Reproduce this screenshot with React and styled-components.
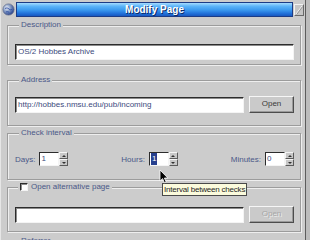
import React from 'react';
import styled, {createGlobalStyle} from 'styled-components';

const GlobalStyle = createGlobalStyle`
  html, body {
    margin: 0;
    padding: 0;
    background: #bcbcbc;
  }
  body {
    font-family: "Liberation Sans", Arial, sans-serif;
    font-size: 8px;
  }
`;

const Window = styled.div`
  position: relative;
  width: 306px;
  height: 240px;
  overflow: hidden;
  box-sizing: border-box;
  background: #cccccc;
  border-left: 1px solid #e6e6e6;
  border-right: 1px solid #5c5c5c;
`;

const TitleBar = styled.div`
  display: flex;
  align-items: center;
  height: 18px;
  padding: 0 1px 0 1px;
  gap: 1px;
`;

const Caption = styled.div`
  flex: 1;
  height: 15px;
  box-sizing: border-box;
  border: 1px solid #1c3c86;
  background: linear-gradient(#a6dcff 0%, #5cb4f8 25%, #3a98ee 55%, #2272da 80%, #1858c0 100%);
  color: #ffffff;
  font: bold 10px "Liberation Sans", Arial, sans-serif;
  line-height: 13px;
  text-align: center;
  text-shadow: 1px 1px 0 #0c2a66;
`;

const CloseBox = styled.div`
  width: 10px;
  height: 12px;
  margin-top: 2px;
  box-sizing: border-box;
  background: #c6c6c6;
  border: 1px solid;
  border-color: #f2f2f2 #6a6a6a #6a6a6a #f2f2f2;
  display: flex;
`;

const Body = styled.div`
  display: flex;
  flex-direction: column;
  padding: 0 4px 0 6px;
`;

const Group = styled.fieldset`
  margin: ${p => p.$mt}px 0 0;
  height: ${p => p.$h}px;
  box-sizing: border-box;
  padding: ${p => p.$pt}px 6px 0 7px;
  border: 1px solid #9c9c9c;
  box-shadow: inset 1px 1px 0 #eeeeee, 1px 1px 0 #eeeeee;
  min-width: 0;
  flex-shrink: 0;
`;

const Legend = styled.legend`
  display: flex;
  align-items: center;
  gap: 3px;
  margin-left: ${p => p.$ml || 4}px;
  padding: 0 2px;
  line-height: 10px;
  color: #4a5888;
  background: #cccccc;
`;

const Row = styled.div`
  display: flex;
  align-items: flex-end;
  gap: 5px;
`;

const SpreadRow = styled.div`
  display: flex;
  align-items: center;
  justify-content: space-between;
`;

const TextField = styled.div`
  flex: 1;
  height: 16px;
  box-sizing: border-box;
  background: #ffffff;
  border: 1px solid;
  border-color: #2c2c2c #f4f4f4 #f4f4f4 #2c2c2c;
  box-shadow: inset 1px 1px 0 #8c8c8c;
  padding-left: 2px;
  line-height: 14px;
  color: #3c4a7c;
  white-space: nowrap;
  overflow: hidden;
`;

const Button = styled.div`
  width: 45px;
  height: 17px;
  box-sizing: border-box;
  background: #cacaca;
  border: 1px solid;
  border-color: #f6f6f6 #4c4c4c #4c4c4c #f6f6f6;
  box-shadow: inset -1px -1px 0 #9a9a9a;
  text-align: center;
  line-height: 14px;
  color: ${p => (p.$disabled ? '#a6a6a6' : '#3a3a3a')};
  text-shadow: ${p => (p.$disabled ? '1px 1px 0 #ececec' : 'none')};
`;

const Field = styled.div`
  display: flex;
  align-items: center;
  gap: 4px;
  color: #4a5888;
`;

const Spin = styled.div`
  display: flex;
  height: 14px;
`;

const SpinValue = styled.div`
  width: 20px;
  box-sizing: border-box;
  background: #ffffff;
  border: 1px solid;
  border-color: #2c2c2c #f4f4f4 #f4f4f4 #2c2c2c;
  padding-left: 1px;
  line-height: 12px;
  color: #3c4a7c;
`;

const Selected = styled.span`
  display: inline-block;
  background: #263f8e;
  color: #ffffff;
  padding: 0 1px;
`;

const SpinButtons = styled.div`
  display: flex;
  flex-direction: column;
  width: 9px;
`;

const SpinButton = styled.div`
  flex: 1;
  box-sizing: border-box;
  background: #c8c8c8;
  border: 1px solid;
  border-color: #f4f4f4 #5a5a5a #5a5a5a #f4f4f4;
  display: flex;
  align-items: center;
  justify-content: center;

  &::after {
    content: '';
    border-left: 2px solid transparent;
    border-right: 2px solid transparent;
    ${p => (p.$down ? 'border-top: 2px solid #303030;' : 'border-bottom: 2px solid #303030;')}
  }
`;

const CheckBox = styled.span`
  display: inline-block;
  width: 8px;
  height: 8px;
  box-sizing: border-box;
  background: #ffffff;
  border: 1px solid;
  border-color: #2c2c2c #f4f4f4 #f4f4f4 #2c2c2c;
  box-shadow: inset 1px 1px 0 #8c8c8c;
`;

const Tooltip = styled.div`
  position: absolute;
  left: 161px;
  top: 183px;
  height: 13px;
  box-sizing: border-box;
  padding: 0 1px;
  border: 1px solid #4a4a4a;
  background: #fbfbdc;
  color: #1e1e1e;
  line-height: 11px;
  letter-spacing: -0.2px;
  white-space: nowrap;
`;

const Pointer = styled.svg`
  position: absolute;
  left: 158px;
  top: 169px;
`;

const AppIcon = () => (
  <svg width="13" height="13" viewBox="0 0 13 13">
    <defs>
      <radialGradient id="g" cx="0.35" cy="0.35" r="0.7">
        <stop offset="0" stopColor="#f4f6fa" />
        <stop offset="0.45" stopColor="#8aa0c8" />
        <stop offset="1" stopColor="#1e3a8a" />
      </radialGradient>
    </defs>
    <circle cx="6.5" cy="6.5" r="5.6" fill="url(#g)" stroke="#6a7490" strokeWidth="0.8" />
    <path d="M3 5.5c1.5-1 3-.5 4 .5s2 1 3 .3M4 9c1-.6 2.4-.3 3.2.5" stroke="#2a4aa0" strokeWidth="0.9" fill="none" />
  </svg>
);

const Spinner = ({value, selected}) => (
  <Spin>
    <SpinValue>{selected ? <Selected>{value}</Selected> : value}</SpinValue>
    <SpinButtons>
      <SpinButton />
      <SpinButton $down />
    </SpinButtons>
  </Spin>
);

export default function App() {
  return (
    <>
      <GlobalStyle />
      <Window>
        <TitleBar>
          <AppIcon />
          <Caption>Modify Page</Caption>
          <CloseBox>
            <svg width="8" height="10" viewBox="0 0 8 10">
              <path d="M1 9L7 1" stroke="#f4f4f4" strokeWidth="1" />
              <path d="M1.8 9.4L7.6 1.6" stroke="#8a8a8a" strokeWidth="0.8" />
            </svg>
          </CloseBox>
        </TitleBar>
        <Body>
          <Group $mt={2} $h={45} $pt={14}>
            <Legend>Description</Legend>
            <Row>
              <TextField>OS/2 Hobbes Archive</TextField>
            </Row>
          </Group>
          <Group $mt={10} $h={51} $pt={11}>
            <Legend>Address</Legend>
            <Row>
              <TextField>http://hobbes.nmsu.edu/pub/incoming</TextField>
              <Button>Open</Button>
            </Row>
          </Group>
          <Group $mt={2} $h={52} $pt={14}>
            <Legend>Check interval</Legend>
            <SpreadRow>
              <Field>Days: <Spinner value="1" /></Field>
              <Field>Hours: <Spinner value="1" selected /></Field>
              <Field>Minutes: <Spinner value="0" /></Field>
            </SpreadRow>
          </Group>
          <Group $mt={2} $h={50} $pt={14}>
            <Legend $ml={3}>
              <CheckBox />
              Open alternative page
            </Legend>
            <Row>
              <TextField />
              <Button $disabled>Open</Button>
            </Row>
          </Group>
          <Group $mt={4} $h={40} $pt={14}>
            <Legend>Referrer</Legend>
          </Group>
        </Body>
        <Tooltip>Interval between checks</Tooltip>
        <Pointer width="10" height="15" viewBox="0 0 10 15">
          <path d="M1 1v11l2.6-2.4 1.8 4.2 1.8-.8-1.8-4h3.4z" fill="#000" stroke="#fff" strokeWidth="0.8" />
        </Pointer>
      </Window>
    </>
  );
}
